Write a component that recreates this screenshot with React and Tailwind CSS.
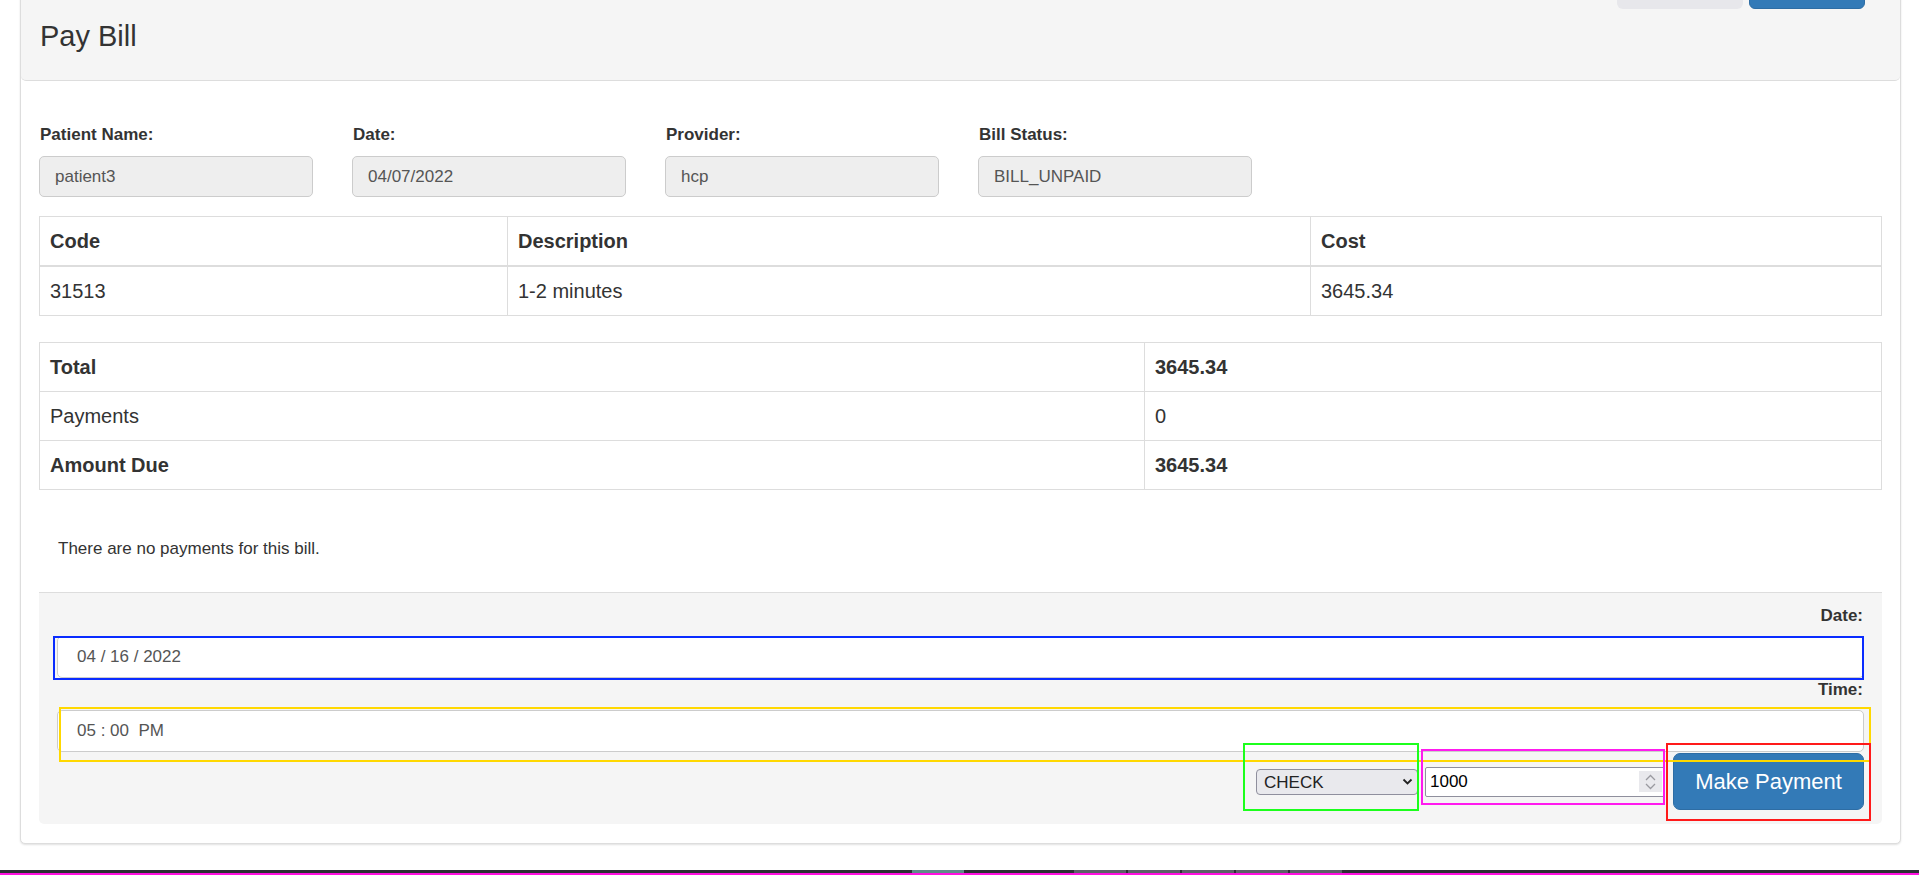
import React from 'react';

const FONT = "font-['Liberation_Sans',Arial,sans-serif]";

const billInfo = [
  { label: 'Patient Name:', value: 'patient3' },
  { label: 'Date:', value: '04/07/2022' },
  { label: 'Provider:', value: 'hcp' },
  { label: 'Bill Status:', value: 'BILL_UNPAID' },
];

// debug outlines that sit on top of the payment form in the screenshot
const marks = [
  { cls: 'left-[53px] top-[636px] w-[1811px] h-[44px] border-[#0a2cff]' },
  { cls: 'left-[59px] top-[707px] w-[1812px] h-[55px] border-[#ffd800]' },
  { cls: 'left-[1243px] top-[743px] w-[176px] h-[68px] border-[#1cff1c]' },
  { cls: 'left-[1421px] top-[749px] w-[244px] h-[56px] border-[#ff1aee]' },
  { cls: 'left-[1666px] top-[743px] w-[205px] h-[78px] border-[#ff1a1a]' },
];

const Spinner = () => (
  <div className="w-[23px] h-[21px] bg-[#e9e9ed] flex flex-col items-center justify-center gap-[2px] mr-[2px]">
    <svg width="11" height="7" viewBox="0 0 11 7" fill="none" stroke="#9a9aa0" strokeWidth="1.3">
      <path d="M1 6 L5.5 1.5 L10 6" />
    </svg>
    <svg width="11" height="7" viewBox="0 0 11 7" fill="none" stroke="#9a9aa0" strokeWidth="1.3">
      <path d="M1 1 L5.5 5.5 L10 1" />
    </svg>
  </div>
);

export default function App() {
  return (
    <div className={`relative h-[875px] overflow-hidden bg-white flex flex-col text-[#333] ${FONT}`}>
      <div className="pl-[20px] pr-[18px] -mt-[40px]">
        <div className="border border-[#ddd] rounded-[5px] bg-white shadow-[0_1px_2px_rgba(0,0,0,0.12)]">
          {/* heading */}
          <div className="h-[120px] bg-[#f5f5f5] border-b border-[#ddd] rounded-[5px] flex justify-between items-start pl-[19px] pr-[35px]">
            <h3 className="mt-[59px] text-[29px] leading-[32px] font-normal text-[#333]">Pay Bill</h3>
            <div className="flex gap-[6px] mt-[6px]">
              <button type="button" className="w-[126px] h-[42px] rounded-[6px] bg-[#e7e7eb]" />
              <button type="button" className="w-[116px] h-[42px] rounded-[6px] bg-[#337ab7] border border-[#2e6da4]" />
            </div>
          </div>

          {/* body */}
          <div className="pt-[41px] pl-[18px] pr-[18px] pb-[19px]">
            <div className="flex">
              {billInfo.map((f) => (
                <div key={f.label} className="w-[313px]">
                  <label className="block pl-[1px] text-[17px] leading-[25px] font-bold mb-[9px]">{f.label}</label>
                  <input
                    readOnly
                    value={f.value}
                    className="w-[274px] h-[41px] bg-[#eee] border border-[#ccc] rounded-[5px] px-[15px] text-[17px] text-[#555] outline-none"
                  />
                </div>
              ))}
            </div>

            <table className="w-full mt-[19px] border-collapse text-[20px] leading-[28px]">
              <thead>
                <tr>
                  <th className="w-[468px] text-left font-bold px-[10px] py-[10px] border border-[#ddd] border-b-2">Code</th>
                  <th className="w-[803px] text-left font-bold px-[10px] py-[10px] border border-[#ddd] border-b-2">Description</th>
                  <th className="text-left font-bold px-[10px] py-[10px] border border-[#ddd] border-b-2">Cost</th>
                </tr>
              </thead>
              <tbody>
                <tr>
                  <td className="px-[10px] py-[10px] border border-[#ddd]">31513</td>
                  <td className="px-[10px] py-[10px] border border-[#ddd]">1-2 minutes</td>
                  <td className="px-[10px] py-[10px] border border-[#ddd]">3645.34</td>
                </tr>
              </tbody>
            </table>

            <table className="w-full mt-[26px] border-collapse text-[20px] leading-[28px]">
              <tbody>
                <tr>
                  <td className="w-[1105px] px-[10px] py-[10px] border border-[#ddd] font-bold">Total</td>
                  <td className="px-[10px] py-[10px] border border-[#ddd] font-bold">3645.34</td>
                </tr>
                <tr>
                  <td className="px-[10px] py-[10px] border border-[#ddd]">Payments</td>
                  <td className="px-[10px] py-[10px] border border-[#ddd]">0</td>
                </tr>
                <tr>
                  <td className="px-[10px] py-[10px] border border-[#ddd] font-bold">Amount Due</td>
                  <td className="px-[10px] py-[10px] border border-[#ddd] font-bold">3645.34</td>
                </tr>
              </tbody>
            </table>

            <p className="mt-[47px] pl-[19px] text-[17px] leading-[24px]">There are no payments for this bill.</p>

            {/* payment form */}
            <div className="mt-[31px] bg-[#f5f5f5] border-t border-[#ddd] rounded-b-[5px] pl-[18px] pr-[18px] pt-[11px] pb-[14px]">
              <label className="block text-right text-[17px] leading-[24px] font-bold mb-[8px] pr-[1px]">Date:</label>
              <input
                readOnly
                value="04 / 16 / 2022"
                className="w-full h-[42px] bg-white border border-[#ccc] rounded-[5px] px-[19px] text-[17px] text-[#555] outline-none"
              />
              <label className="block text-right text-[17px] leading-[24px] font-bold mb-[8px] pr-[1px]">Time:</label>
              <input
                readOnly
                value="05 : 00  PM"
                className="w-full h-[42px] bg-white border border-[#ccc] rounded-[5px] px-[19px] text-[17px] text-[#555] outline-none whitespace-pre"
              />
              <div className="flex justify-end items-center h-[57px] mt-[1px]">
                <div className="relative w-[162px] h-[26px]">
                  <select
                    defaultValue="CHECK"
                    className="appearance-none w-full h-full bg-[#e9e9ed] border border-[#8f8f9d] rounded-[4px] pl-[7px] text-[17px] text-[#222] outline-none"
                  >
                    <option value="CHECK">CHECK</option>
                    <option value="CASH">CASH</option>
                    <option value="CREDIT_CARD">CREDIT_CARD</option>
                  </select>
                  <svg className="absolute right-[5px] top-[9px] pointer-events-none" width="11" height="8" viewBox="0 0 11 8" fill="none" stroke="#222" strokeWidth="1.8">
                    <path d="M1.5 1.5 L5.5 5.5 L9.5 1.5" />
                  </svg>
                </div>
                <div className="ml-[7px] w-[240px] h-[30px] bg-white border border-[#8f8f9d] rounded-[2px] flex items-center">
                  <input
                    readOnly
                    value="1000"
                    className="flex-1 min-w-0 h-full pl-[4px] text-[17px] text-black outline-none bg-transparent"
                  />
                  <Spinner />
                </div>
                <button
                  type="button"
                  className="ml-[8px] w-[191px] h-[57px] rounded-[7px] bg-[#337ab7] border border-[#2e6da4] text-white text-[22px] leading-[30px]"
                >
                  Make Payment
                </button>
              </div>
            </div>
          </div>
        </div>
      </div>

      <div className="flex-1" />

      {/* window edge at the bottom of the capture */}
      <div className="h-[3px] bg-[#2c2e34] flex">
        <div className="w-[912px]" />
        <div className="w-[52px] bg-[#5f8b8a]" />
        <div className="w-[110px]" />
        <div className="w-[52px] bg-[#5c6068]" />
        <div className="w-[2px]" />
        <div className="w-[52px] bg-[#5c6068]" />
        <div className="w-[2px]" />
        <div className="w-[52px] bg-[#5c6068]" />
        <div className="w-[2px]" />
        <div className="w-[52px] bg-[#5c6068]" />
        <div className="w-[2px]" />
        <div className="w-[52px] bg-[#5c6068]" />
      </div>
      <div className="h-[2px] bg-[#ff10e0]" />

      {marks.map((m, i) => (
        <div key={i} className={`absolute border-2 pointer-events-none ${m.cls}`} />
      ))}
    </div>
  );
}
